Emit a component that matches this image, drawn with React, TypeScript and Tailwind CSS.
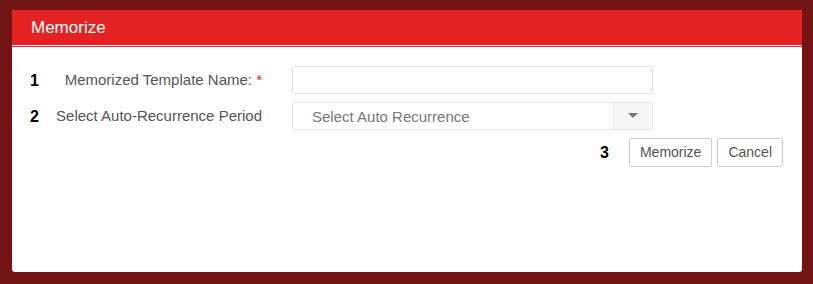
import { ChevronDown } from "lucide-react";

export default function App() {
  return (
    <div className="w-full h-[284px] bg-[#721414] pl-3 pr-[11px] pt-[10px] pb-3 font-['Liberation_Sans',Arial,sans-serif]">
      <div className="h-full bg-white rounded-[3px] overflow-hidden flex flex-col">
        {/* Header */}
        <div className="h-[35px] bg-[#e52222] flex items-center pl-[19px] pt-px text-white text-[17px] shrink-0">
          Memorize
        </div>
        <div className="h-px bg-white shrink-0" />
        <div className="h-px bg-[#d92a2a] shrink-0" />

        {/* Body */}
        <div className="pt-[19px] pl-[18px] pr-[19px] flex flex-col gap-2">
          <Row num="1">
            <span>
              Memorized Template Name: <span className="text-[#e52222]">*</span>
            </span>
            <div className="w-[361px] h-[28px] border border-[#e3e3e3] rounded-[2px]" />
          </Row>
          <Row num="2">
            <span>Select Auto-Recurrence Period</span>
            <div className="w-[361px] h-[28px] border border-[#e3e3e3] rounded-[2px] flex">
              <div className="flex-1 flex items-center pl-[19px] pt-[2px] text-[15px] text-[#777]">
                Select Auto Recurrence
              </div>
              <div className="w-[39px] border-l border-[#ececec] bg-[#f7f7f7] flex items-center justify-center">
                <svg width="10" height="6" viewBox="0 0 10 6">
                  <path d="M0 0h10L5 5z" fill="#777" />
                </svg>
              </div>
            </div>
          </Row>
          <div className="flex justify-end items-center">
            <span className="font-bold text-[16px] text-black mr-[20px]">3</span>
            <button className="h-[29px] px-[10px] border border-[#cfcfcf] rounded-[2px] text-[14px] text-[#555] bg-white">
              Memorize
            </button>
            <button className="h-[29px] px-[10px] ml-[5px] border border-[#cfcfcf] rounded-[2px] text-[14px] text-[#555] bg-white">
              Cancel
            </button>
          </div>
        </div>
      </div>
    </div>
  );
}

function Row({ num, children }: { num: string; children: [React.ReactNode, React.ReactNode] }) {
  return (
    <div className="flex items-center">
      <span className="w-[20px] font-bold text-[16px] text-black pt-px">{num}</span>
      <div className="w-[212px] text-right text-[15px] text-[#555] pt-px">{children[0]}</div>
      <div className="ml-[30px]">{children[1]}</div>
    </div>
  );
}
